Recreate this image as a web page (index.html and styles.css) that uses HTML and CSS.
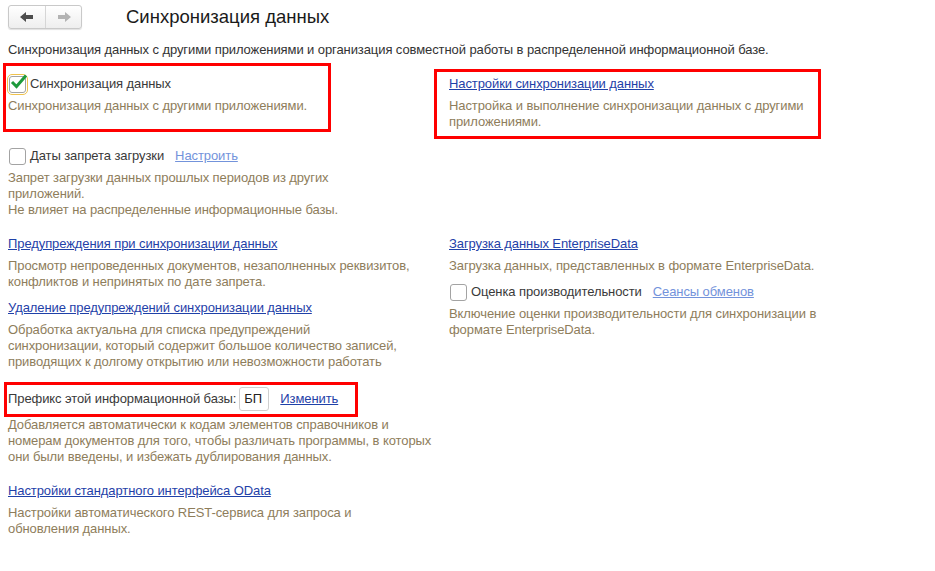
FILE: index.html
```html
<!DOCTYPE html>
<html lang="ru">
<head>
    <meta charset="UTF-8">
    <title>Синхронизация данных</title>
    <link rel="stylesheet" href="styles.css">
</head>
<body>
    <div class="header">
        <div class="nav-buttons">
            <button class="nav-btn">
                <svg width="14" height="12" viewBox="0 0 14 12"><path d="M0 6 L6 1 L6 4 L13 4 L13 8 L6 8 L6 11 Z" fill="#4d4d4d"/></svg>
            </button>
            <button class="nav-btn">
                <svg width="14" height="12" viewBox="0 0 14 12"><path d="M14 6 L8 1 L8 4 L1 4 L1 8 L8 8 L8 11 Z" fill="#b3b3b3"/></svg>
            </button>
        </div>
        <h1>Синхронизация данных</h1>
    </div>

    <div class="intro">Синхронизация данных с другими приложениями и организация совместной работы в распределенной информационной базе.</div>

    <div class="row row-top">
        <div class="col-left">
            <div class="mark mark-sync">
                <label class="check-row">
                    <span class="checkbox checked">
                        <svg width="18" height="16" viewBox="0 0 18 16"><path d="M2 8 L6.5 12.5 L16 1.5" fill="none" stroke="#1e9a3c" stroke-width="3"/></svg>
                    </span>
                    <span class="label">Синхронизация данных</span>
                </label>
                <div class="note note-gap">Синхронизация данных с другими приложениями.</div>
            </div>

            <label class="check-row dates-row">
                <span class="checkbox"></span>
                <span class="label">Даты запрета загрузки</span>
                <a href="#" class="link-light">Настроить</a>
            </label>
            <div class="note note-gap">Запрет загрузки данных прошлых периодов из других<br>приложений.<br>Не влияет на распределенные информационные базы.</div>
        </div>

        <div class="col-right">
            <div class="mark mark-settings">
                <a href="#" class="link">Настройки синхронизации данных</a>
                <div class="note">Настройка и выполнение синхронизации данных с другими<br>приложениями.</div>
            </div>
        </div>
    </div>

    <div class="row row-bottom">
        <div class="col-left">
            <a href="#" class="link">Предупреждения при синхронизации данных</a>
            <div class="note">Просмотр непроведенных документов, незаполненных реквизитов,<br>конфликтов и непринятых по дате запрета.</div>

            <a href="#" class="link link-next">Удаление предупреждений синхронизации данных</a>
            <div class="note">Обработка актуальна для списка предупреждений<br>синхронизации, который содержит большое количество записей,<br>приводящих к долгому открытию или невозможности работать</div>

            <div class="mark mark-prefix">
                <span class="label">Префикс этой информационной базы:</span>
                <span class="field">БП</span>
                <a href="#" class="link">Изменить</a>
            </div>
            <div class="note note-flat">Добавляется автоматически к кодам элементов справочников и<br>номерам документов для того, чтобы различать программы, в которых<br>они были введены, и избежать дублирования данных.</div>

            <a href="#" class="link link-section">Настройки стандартного интерфейса OData</a>
            <div class="note">Настройки автоматического REST-сервиса для запроса и<br>обновления данных.</div>
        </div>

        <div class="col-right">
            <a href="#" class="link">Загрузка данных EnterpriseData</a>
            <div class="note">Загрузка данных, представленных в формате EnterpriseData.</div>

            <label class="check-row perf-row">
                <span class="checkbox"></span>
                <span class="label">Оценка производительности</span>
                <a href="#" class="link-light">Сеансы обменов</a>
            </label>
            <div class="note note-gap">Включение оценки производительности для синхронизации в<br>формате EnterpriseData.</div>
        </div>
    </div>
</body>
</html>
```

FILE: styles.css
```css
body {
    margin: 0;
    padding: 0;
    font-family: "Liberation Sans", Arial, sans-serif;
    font-size: 13px;
    line-height: 16px;
    letter-spacing: -0.09px;
    color: #3a3a3a;
    background: #fff;
}

/* шапка с кнопками навигации */
.header {
    display: flex;
    align-items: center;
    height: 34px;
    padding-left: 8px;
}

.nav-buttons {
    display: flex;
    height: 22px;
    margin-top: -1px;
    border: 1px solid #c9c9c9;
    border-radius: 3px;
    background: linear-gradient(#ffffff, #eeeeee);
    box-shadow: 0 1px 1px rgba(0, 0, 0, 0.12);
}

.nav-btn {
    width: 36px;
    height: 22px;
    padding: 0;
    border: none;
    background: transparent;
    display: flex;
    align-items: center;
    justify-content: center;
}

.nav-btn + .nav-btn {
    border-left: 1px solid #d6d6d6;
}

.header h1 {
    margin: 0 0 0 44px;
    font-size: 18.5px;
    font-weight: normal;
    letter-spacing: 0;
    color: #1a1a1a;
}

.intro {
    padding: 8px 8px 0;
    color: #333;
}

.row {
    display: grid;
    grid-template-columns: 441px 1fr;
    padding-left: 8px;
}

.row-top {
    margin-top: 5px;
}

.row-bottom {
    margin-top: 18px;
}

.col-left, .col-right {
    display: flex;
    flex-direction: column;
    align-items: flex-start;
}

/* красные рамки выделения */
.mark {
    border: 3px solid #f00;
}

.mark-sync {
    width: 320px;
    margin-left: -5px;
    padding: 8px 0 15px 2px;
}

.mark-settings {
    width: 369px;
    margin: 6px 0 0 -15px;
    padding: 4px 0 6px 12px;
}

.mark-prefix {
    display: flex;
    align-items: center;
    width: 347px;
    height: 26px;
    margin: 12px 0 0 -4px;
    padding: 1px 0 2px 1px;
}

.check-row {
    display: flex;
    align-items: center;
    height: 20px;
}

.checkbox {
    position: relative;
    box-sizing: border-box;
    width: 17px;
    height: 17px;
    margin: 0 4px 0 1px;
    border: 1px solid #a3a3a3;
    border-radius: 3px;
    background: #fff;
}

.checkbox.checked {
    outline: 1px solid #f0c24c;
    outline-offset: 1px;
}

.checkbox svg {
    position: absolute;
    left: 0;
    top: -3px;
}

.label {
    color: #3a3a3a;
}

.link {
    color: #1f41a8;
    text-decoration: underline;
}

.link-light {
    margin-left: 11px;
    color: #7393db;
    text-decoration: underline;
}

.note {
    margin-top: 6px;
    color: #8e7d5b;
}

.note-gap {
    margin-top: 4px;
}

.note-flat {
    margin-top: 0;
}

.dates-row {
    margin-top: 14px;
}

.perf-row {
    margin-top: 8px;
}

.link-next {
    margin-top: 10px;
}

.link-section {
    margin-top: 18px;
}

.field {
    box-sizing: border-box;
    width: 30px;
    height: 24px;
    margin-left: 3px;
    padding: 3px 0 0 4px;
    border: 1px solid #cfcfcf;
    border-radius: 3px;
    color: #222;
}

.mark-prefix .link {
    margin-left: 11px;
}
```
